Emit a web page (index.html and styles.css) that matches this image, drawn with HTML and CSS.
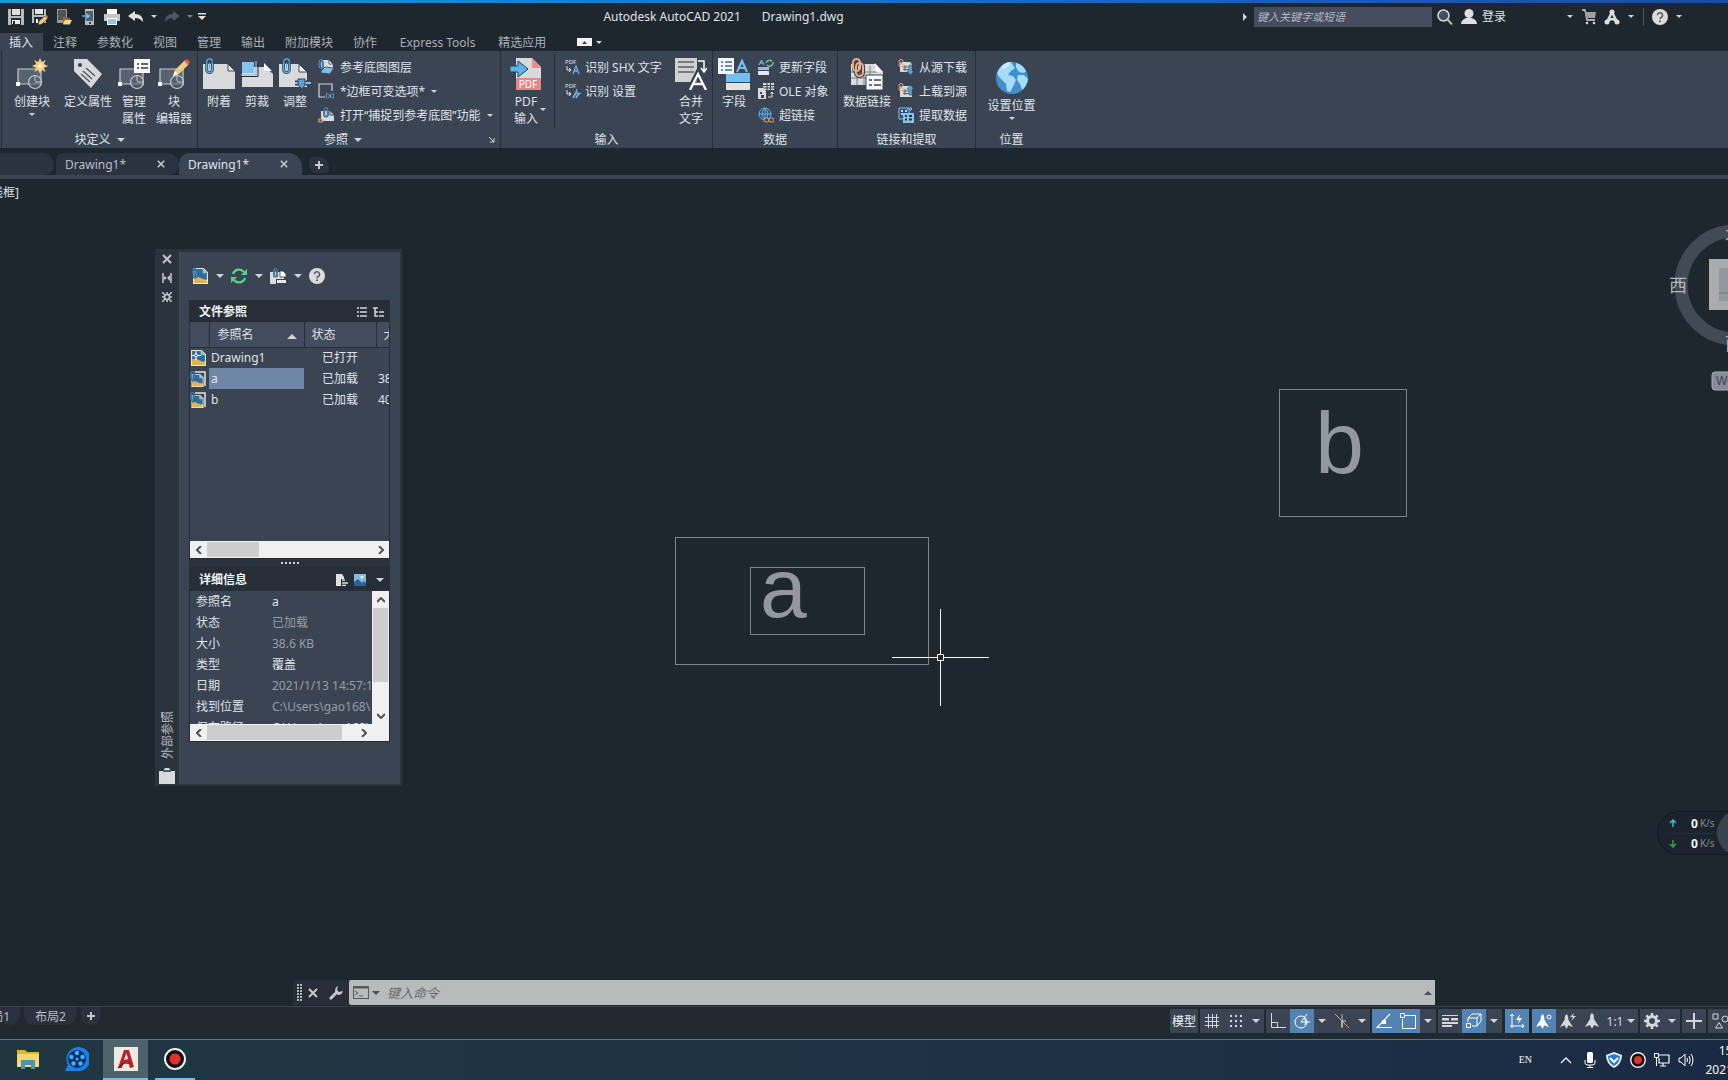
FILE: index.html
```html
<!DOCTYPE html>
<html lang="zh-CN">
<head>
<meta charset="utf-8">
<title>Autodesk AutoCAD 2021 - Drawing1.dwg</title>
<link rel="stylesheet" href="styles.css">
</head>
<body>
<svg class="defs" aria-hidden="true">
  <symbol id="clip" viewBox="0 0 9 18"><path d="M7.500 4v8.500a3 3 0 0 1-6 0V4a2.500 2.500 0 0 1 5 0" fill="none" stroke="#1d4468" stroke-width="3"/><path d="M7.500 4.500v8a3 3 0 0 1-6 0V4a3 3 0 0 1 6 0M4.500 5v7" fill="none" stroke="#6cb2e2" stroke-width="1.300"/></symbol>
  <symbol id="block" viewBox="0 0 32 32"><path d="M2 11h23v15H2z" fill="#596270" stroke="#c9cbce" stroke-width="1.200"/><path d="M0 24h4v4H0z" fill="#fff"/><circle cx="19" cy="24" r="6.500" fill="#596270" fill-opacity=".6" stroke="#c9cbce" stroke-width="1.200"/><path d="M19 23v-6M19 24h6" stroke="#c9cbce"/></symbol>
  <symbol id="sheet" viewBox="0 0 32 32"><path d="M0 6h25l7 7v18H0z" fill="#d9dadb"/><path d="M25 6v7h7z" fill="#fff" stroke="#39424f"/></symbol>
  <symbol id="xref" viewBox="1 1 14 15"><path d="M1 1h10l4 4v11H1z" fill="#efe9c9"/><path d="M2 2h8l4 4v6H2z" fill="#2c6c9f"/><path d="M2 10l3-1 9 4v2H2z" fill="#e4b44b"/><path d="M10 1v5h5z" fill="#8fc0e0"/></symbol>
  <symbol id="help" viewBox="0 0 16 16"><circle cx="8" cy="8" r="8" fill="#dcdcdc"/><path d="M5.500 6.300a2.500 2.500 0 1 1 3.600 2.200q-1.100.6-1.100 1.800" fill="none" stroke="#555d66" stroke-width="1.500"/><circle cx="8" cy="12.300" r="1" fill="#555d66"/></symbol>
  <symbol id="cross" viewBox="0 0 10 10"><path d="M1 1l8 8M9 1l-8 8" stroke="#c4c8cc" stroke-width="2"/></symbol>
  <symbol id="ann" viewBox="0 0 16 16"><path d="M8 0q2 1 2 6l5 8-5-2-2 4-2-4-5 2 5-8q0-5 2-6z" fill="currentColor"/></symbol>
  <symbol id="rec" viewBox="0 0 22 22"><circle cx="11" cy="11" r="10" fill="#160d0e" stroke="#eceeee" stroke-width="2"/><circle cx="11" cy="11" r="5.500" fill="#e2302d"/></symbol>
</svg>

<div class="edge"></div>
<header class="titlebar">
  <div class="qat">
    <button aria-label="保存"><svg class="i16" viewBox="0 0 16 16"><path d="M0 0h16v16H0z" fill="#b9bdb9"/><path d="M3 0h10v7H3z" fill="#232b33"/><path d="M4 0h8v6H4z" fill="#dcdedc"/><path d="M3 9h10v7H3z" fill="#232b33"/><path d="M4 11h8v4H4z" fill="#e8eae8"/><path d="M5 12h2v3H5z" fill="#232b33"/></svg></button>
    <button aria-label="另存为"><svg class="i16" viewBox="0 0 16 16"><path d="M0 0h14v14H0z" fill="#b9bdb9"/><path d="M2 0h10v6H2z" fill="#232b33"/><path d="M3 0h8v5H3z" fill="#e4e6e4"/><path d="M2 8h10v6H2z" fill="#232b33"/><path d="M4 10h2v4H4z" fill="#f0f0f0"/><path d="M6 16l1-4 6-5 3 2-6 6z" fill="#f0cd7a" stroke="#3a3227" stroke-width=".6"/><path d="M13 7l2-1 1 2-1 1z" fill="#e2614f"/></svg></button>
    <button aria-label="打开"><svg class="i16" viewBox="0 0 16 16"><path d="M1 0h10v14H1z" fill="#9a9894"/><path d="M2 1h8v10H2z" fill="#55534f"/><path d="M7 8h3l1 1h3v7H7z" fill="#8c6f3e"/><path d="M9 11h7l-2 4H7z" fill="#f3d58c"/></svg></button>
    <button aria-label="保存到移动设备"><svg class="i16" viewBox="0 0 16 16"><path d="M5 0h9v16H5z" fill="#b8bcc0"/><path d="M6 2h7v10H6z" fill="#56606a"/><path d="M9 13h2v2H9z" fill="#39424f"/><path d="M2 6h4V3l5 4-5 4V8H2z" fill="#6fbdf0" stroke="#1f2f3c" stroke-width=".5"/></svg></button>
    <button aria-label="打印"><svg class="i16" viewBox="0 0 16 16"><path d="M3 0h10v5H3z" fill="#fff"/><path d="M0 5h16v7H0z" fill="#c6c8c9"/><path d="M3 9h10v7H3z" fill="#fff"/><path d="M4 10h8v5H4z" fill="#8dc8ee"/></svg></button>
    <button aria-label="放弃"><svg class="i16" viewBox="0 0 16 16"><path d="M0 7l7-5v3q8 0 8 8-3-4-8-4v3z" fill="#dde0e2"/></svg></button>
    <button class="narrow" aria-label="放弃列表"><i class="caret"></i></button>
    <button aria-label="重做"><svg class="i16" viewBox="0 0 16 16"><path d="M16 7L9 2v3q-8 0-8 8 3-4 8-4v3z" fill="#4f5964"/></svg></button>
    <button class="narrow" aria-label="重做列表"><i class="caret dim"></i></button>
    <button class="narrow" aria-label="自定义快速访问工具栏"><svg width="8" height="8" viewBox="0 0 8 8"><path d="M0 0h8v1.500H0zM0 3h8L4 7z" fill="#dde0e2"/></svg></button>
  </div>
  <h1 class="title"><span>Autodesk AutoCAD 2021</span><span>Drawing1.dwg</span></h1>
  <div class="infocenter">
    <i class="caret-right"></i>
    <input class="search" type="search" placeholder="键入关键字或短语" aria-label="搜索">
    <button aria-label="搜索"><svg class="i16" viewBox="0 0 16 16"><circle cx="6.500" cy="6.500" r="5.500" fill="#454e5a" stroke="#d5d8da" stroke-width="1.500"/><path d="M10.500 10.500l4.500 5" stroke="#c9b593" stroke-width="2"/></svg></button>
    <button class="login"><svg class="i16" viewBox="0 0 16 16"><circle cx="8" cy="4.500" r="4.500" fill="#dcdedf"/><path d="M0 15q0-4 5-6h6q5 2 5 6z" fill="#dcdedf"/></svg>登录</button>
    <button class="narrow" aria-label="登录选项"><i class="caret"></i></button>
    <button aria-label="应用商店"><svg class="i16" viewBox="0 0 16 16"><path d="M1 1h3l2 10h8" fill="none" stroke="#d4d6d8" stroke-width="1.300"/><path d="M4 3h11l-1 6H5z" fill="#9a9fa4"/><circle cx="6" cy="14" r="1.300" fill="#d4d6d8"/><circle cx="13" cy="14" r="1.300" fill="#d4d6d8"/></svg></button>
    <button aria-label="保持连接"><svg class="i16" viewBox="0 0 16 16"><path d="M8 3L3 13M8 3l5 10M4 12q4-4 8 0" fill="none" stroke="#dcdedf" stroke-width="2.500"/><circle cx="8" cy="3" r="2.500" fill="#dcdedf"/><circle cx="3" cy="13" r="2.500" fill="#dcdedf"/><circle cx="13" cy="13" r="2.500" fill="#dcdedf"/></svg></button>
    <button class="narrow" aria-label="连接选项"><i class="caret"></i></button>
    <i class="sep"></i>
    <button aria-label="帮助"><svg class="i16"><use href="#help"/></svg></button>
    <button class="narrow" aria-label="帮助选项"><i class="caret"></i></button>
  </div>
</header>

<nav class="ribbon-tabs">
  <button class="on">插入</button><button>注释</button><button>参数化</button><button>视图</button><button>管理</button><button>输出</button><button>附加模块</button><button>协作</button><button class="express">Express Tools</button><button>精选应用</button>
  <button class="minimize" aria-label="最小化功能区"><svg width="15" height="8" viewBox="0 0 15 8"><path d="M0 0h15v8H0z" fill="#f2f2f2"/><path d="M5 6l2.500-3L10 6z" fill="#39424f"/></svg><i class="caret"></i></button>
</nav>

<section class="ribbon">
  <section class="panel p-block">
    <div class="tools">
      <button class="big w52"><svg class="i32" viewBox="0 0 32 32"><use href="#block"/><path d="M24 0l1.800 4 4-2-2 4 4.200 2-4.200 2 2 4-4-2L24 16l-1.800-4-4 2 2-4L16 8l4.200-2-2-4 4 2z" fill="#f6cf7c"/><path d="M24 4l1 3 3 1-3 1-1 3-1-3-3-1 3-1z" fill="#fff2c8"/></svg><span>创建块</span><i class="caret"></i></button>
      <button class="big w52"><svg class="i32" viewBox="0 0 32 32"><path d="M2 1h13l15 15-11 14L2 13z" fill="#d9d9d9"/><circle cx="8" cy="7" r="2" fill="#39424f"/><path d="M14 10l9 8M11 13l9 8M9 16l9 8" stroke="#4a525d" stroke-width="1.200"/></svg><span>定义属性</span></button>
      <button class="big w32"><svg class="i32" viewBox="0 0 32 32"><use href="#block"/><path d="M16 1h16v14H16z" fill="#fbfbfb"/><path d="M19 6h2M23 6h7M19 10h2M23 10h7" stroke="#333c48" stroke-width="1.500"/></svg><span>管理<br>属性</span></button>
      <button class="big w40"><svg class="i32" viewBox="0 0 32 32"><use href="#block"/><path d="M15 18l2-6L27 2l4 4-10 10z" fill="#f2cb7e"/><path d="M15 18l2-5 3 3z" fill="#fff"/><path d="M26 3l3-2 3 3-2 3z" fill="#e0604f"/></svg><span>块<br>编辑器</span></button>
    </div>
    <h2>块定义<i class="caret wide"></i></h2>
  </section>

  <section class="panel p-ref">
    <div class="tools">
      <button class="big w32"><svg class="i32" viewBox="0 0 32 32"><use href="#sheet"/><use href="#clip" x="2" y="0" width="9" height="17"/></svg><span>附着</span></button>
      <button class="big w32"><svg class="i32" viewBox="0 0 32 32"><path d="M1 9h23l8 7v13H1z" fill="#d9dadb"/><path d="M23 5l8 8h-8z" fill="#fff"/><path d="M1 4h12v11H1z" fill="#84c3f0"/><path d="M0 17h15V3" fill="none" stroke="#84c3f0" stroke-width="1.200"/><path d="M0 18.500h17V3" fill="none" stroke="#27313c"/></svg><span>剪裁</span></button>
      <button class="big w32"><svg class="i32" viewBox="0 0 32 32"><path d="M0 6h20l8 8v15H0z" fill="#d9dadb"/><path d="M20 6v8h8z" fill="#fff" stroke="#39424f"/><path d="M16 25h16" stroke="#39424f" stroke-width="5"/><path d="M16 25h16" stroke="#84c3f0" stroke-width="2"/><path d="M19 21h7v6l-3 4-4-4z" fill="#5d9fd2" stroke="#39424f"/><use href="#clip" x="3" y="0" width="9" height="17"/></svg><span>调整</span></button>
      <div class="stack">
        <button><svg class="i16" viewBox="0 0 16 16"><path d="M3 1h8l4 4v5H3z" fill="#d9dadb"/><path d="M11 1v4h4z" fill="#fff" stroke="#39424f" stroke-width=".8"/><path d="M3 12l4-4 9 1-4 6-9-1z" fill="#7dbbe8" stroke="#39424f" stroke-width=".8"/><use href="#clip" x="0" y="0" width="6" height="11"/></svg>参考底图图层</button>
        <button><svg class="i16" viewBox="0 0 16 16"><path d="M7 14H1V1h13v7" fill="none" stroke="#d5d7d9" stroke-width="1.200"/><path d="M9 10q-2 3 0 5.500M15 10q2 3 0 5.500M10.500 11l3 4M13.500 11l-3 4" fill="none" stroke="#6cb2e2"/></svg>*边框可变选项*<i class="caret"></i></button>
        <button><svg class="i16" viewBox="0 0 16 16"><path d="M3 4h9l4 4v6H3z" fill="#d9dadb"/><path d="M12 3v5h4" fill="none" stroke="#39424f"/><path d="M1 12h3v3H1z" fill="#39424f" stroke="#e5a07b" stroke-width="1.200"/><use href="#clip" x="5" y="0" width="6" height="11"/></svg>打开“捕捉到参考底图”功能<i class="caret"></i></button>
      </div>
    </div>
    <h2>参照<i class="caret wide"></i></h2>
    <button class="launcher" aria-label="外部参照"><svg width="6" height="6" viewBox="0 0 6 6"><path d="M0 0l5 5M5 1v4H1" fill="none" stroke="#d5d7d9"/></svg></button>
  </section>

  <section class="panel p-import">
    <div class="tools">
      <button class="big w40 pdf"><svg class="i32" viewBox="0 0 32 32"><path d="M6 0h16l9 9v13H6z" fill="#d9d9d9"/><path d="M22 0v10h9z" fill="#f08a8a"/><path d="M6 20h25v12H6z" fill="#ec8585"/><text x="18" y="30" class="pdf-text">PDF</text><path d="M0 8h8V3l10 8-10 8v-5H0z" fill="#5cb4ea" stroke="#24425a"/></svg><span>PDF<br>输入</span><i class="caret"></i></button>
      <i class="rule"></i>
      <div class="stack">
        <button><svg class="i16" viewBox="0 0 16 16"><text x="0" y="5" class="tiny">PDF</text><path d="M2 7v4h4M4 9l2 2-2 2" fill="none" stroke="#e6e8ea"/><path d="M8 15l3-8 3 8M9 12h4" fill="none" stroke="#6cb2e2" stroke-width="1.300"/></svg>识别 SHX 文字</button>
        <button><svg class="i16" viewBox="0 0 16 16"><text x="0" y="5" class="tiny">PDF</text><path d="M2 7v4h4M4 9l2 2-2 2" fill="none" stroke="#e6e8ea"/><path d="M8 15l4-7M11 15l3-5" fill="none" stroke="#6cb2e2" stroke-width="1.800"/><path d="M12 6l-1 3 2 2 3-1" fill="none" stroke="#6cb2e2" stroke-width="1.200"/></svg>识别 设置</button>
      </div>
      <button class="big w40"><svg class="i32" viewBox="0 0 32 32"><path d="M0 0h22v24H0z" fill="#d0d1d2"/><path d="M3 4h16M3 9h16M3 14h16" stroke="#5a5f66" stroke-width="1.500"/><path d="M23 3h6v11M26 10l3 4 3-4" fill="none" stroke="#fff" stroke-width="1.500"/><path d="M14 32l8-16 8 16M17 26h10" fill="none" stroke="#39424f" stroke-width="5"/><path d="M15 32l8-16 8 16M18 26h10" fill="none" stroke="#fff" stroke-width="2.300"/></svg><span>合并<br>文字</span></button>
    </div>
    <h2>输入</h2>
  </section>

  <section class="panel p-data">
    <div class="tools">
      <button class="big w32"><svg class="i32" viewBox="0 0 32 32"><path d="M8 15h24v9H8z" fill="#74bdf0"/><path d="M8 25h24v7H8z" fill="#e1e2e3"/><path d="M0 0h16v16H0z" fill="#f4f8fb"/><path d="M3 4h2M7 4h7M3 8h2M7 8h7M3 12h2M7 12h7" stroke="#2e6fa3" stroke-width="1.600"/><path d="M19 14l5-11 5 11M21 10h6" fill="none" stroke="#74bdf0" stroke-width="2.200"/></svg><span>字段</span></button>
      <div class="stack">
        <button><svg class="i16" viewBox="0 0 16 16"><path d="M1 6l2.500-5L6 6M2 4h3" fill="none" stroke="#84c3f0"/><path d="M8 4a3.500 3.500 0 0 1 6-1.500M15 3a3.500 3.500 0 0 1-6 3" fill="none" stroke="#68c78c" stroke-width="1.500"/><path d="M0 8h11v3H0z" fill="#84c3f0"/><path d="M0 12h11v4H0z" fill="#e6e7e8"/></svg>更新字段</button>
        <button><svg class="i16" viewBox="0 0 16 16"><path d="M5 0h11v7H5z" fill="#d9dadb"/><path d="M5 2.500h11M5 5h11M9 0v7M12.500 0v7" stroke="#39424f"/><path d="M0 5h5l3 3v8H0z" fill="#d9dadb"/><path d="M2 9h2v2H2zM3 12h3v3H3z" fill="#39424f"/><path d="M10 14h4V9M12.500 11L14 9l1.500 2" fill="none" stroke="#d9dadb"/></svg>OLE 对象</button>
        <button><svg class="i16" viewBox="0 0 16 16"><circle cx="7" cy="7" r="6" fill="#274f76" stroke="#6cb2e2"/><path d="M1 7h12M7 1v12M7 1q-6 6 0 12M7 1q6 6 0 12" fill="none" stroke="#6cb2e2"/><rect x="6" y="11" width="5" height="4" rx="2" fill="#39424f" stroke="#e7a470"/><rect x="11" y="11" width="5" height="4" rx="2" fill="#39424f" stroke="#e7a470"/></svg>超链接</button>
      </div>
    </div>
    <h2>数据</h2>
  </section>

  <section class="panel p-link">
    <div class="tools">
      <button class="big w52"><svg class="i32" viewBox="0 0 32 32"><path d="M0 6h24l8 8v13H0z" fill="#d9dadb"/><path d="M24 5v9h8z" fill="#fff"/><path d="M0 14h26M0 20h20M6 8v19M13 8v19M19 8v10" stroke="#7b828a"/><rect x="3" y="1" width="7" height="13" rx="3.500" fill="none" stroke="#39424f" stroke-width="4"/><rect x="5" y="5" width="7" height="13" rx="3.500" fill="none" stroke="#39424f" stroke-width="4"/><rect x="2" y="1" width="7" height="12" rx="3.500" fill="none" stroke="#e9ae84" stroke-width="2"/><rect x="5" y="5" width="7" height="13" rx="3.500" fill="none" stroke="#e9ae84" stroke-width="2"/><path d="M15 17h17v15H15z" fill="#fff" stroke="#39424f"/><path d="M18 22h3M23 22h7M18 27h3M23 27h7" stroke="#39424f" stroke-width="1.500"/></svg><span>数据链接</span></button>
      <div class="stack">
        <button><svg class="i16" viewBox="0 0 16 16"><path d="M4 3h8l2 2v8H2V6z" fill="#d9dadb"/><path d="M5 8h6M5 10.500h6M7 6v6" stroke="#59616b"/><circle cx="3" cy="2.500" r="2" fill="none" stroke="#e9ae84"/><circle cx="3" cy="6" r="2" fill="none" stroke="#e9ae84"/><path d="M11 6h3v6h2l-3.500 4L9 12h2z" fill="#5cabe6" stroke="#39424f" stroke-width=".6"/></svg>从源下载</button>
        <button><svg class="i16" viewBox="0 0 16 16"><path d="M4 3h8l2 2v9H2V6z" fill="#d9dadb"/><path d="M5 8h6M5 10.500h6M7 6v6" stroke="#59616b"/><circle cx="3" cy="2.500" r="2" fill="none" stroke="#e9ae84"/><circle cx="3" cy="6" r="2" fill="none" stroke="#e9ae84"/><path d="M11 12V6H9l3.500-4L16 6h-2v6z" fill="#5cabe6" stroke="#39424f" stroke-width=".6"/></svg>上载到源</button>
        <button><svg class="i16" viewBox="0 0 16 16"><path d="M1 1h10v11H1z" fill="#274f76" stroke="#84c3f0"/><path d="M3 4h2M7 4h2M3 7h2" stroke="#fff" stroke-width="1.500"/><path d="M5 6h11v10H5z" fill="#84c3f0"/><path d="M7 9h2M11 9h3M7 12.500h2M11 12.500h3" stroke="#243240" stroke-width="2"/><path d="M9 2h5M12 0l2 2-2 2" fill="none" stroke="#84c3f0"/></svg>提取数据</button>
      </div>
    </div>
    <h2>链接和提取</h2>
  </section>

  <section class="panel p-loc">
    <div class="tools">
      <button class="big w52"><svg class="i32" viewBox="0 0 32 32"><circle cx="16" cy="16" r="16" fill="#3f8fcb"/><path d="M1 11Q4 3 12 0l4 2 3 4-4 3-3 4 5 1 3 4-2 5-4 7-3-1-1-7-4-4-3-3zM20 1q8 2 10 9l-4 1-4-2-2-4zM22 13l6 0 4 4q-1 7-6 11l-2-6-3-4z" fill="#a6dcfa"/><path d="M5 5q5-5 11-5l-3 4-5 3z" fill="#c9ecfd"/></svg><span>设置位置</span><i class="caret"></i></button>
    </div>
    <h2>位置</h2>
  </section>
</section>

<nav class="doc-tabs">
  <div class="doc blank"></div>
  <div class="doc"><button>Drawing1*</button><button aria-label="关闭"><svg width="8" height="8"><use href="#cross"/></svg></button></div>
  <div class="doc on"><button>Drawing1*</button><button aria-label="关闭"><svg width="8" height="8"><use href="#cross"/></svg></button></div>
  <button class="add" aria-label="新图形"><svg width="8" height="8" viewBox="0 0 8 8"><path d="M4 0v8M0 4h8" stroke="#c4c8cc" stroke-width="2"/></svg></button>
</nav>

<main class="canvas">
  <span class="vp-label">线框]</span>

  <svg class="model">
    <g fill="none" stroke="#7d858b">
      <rect x="675.500" y="358.500" width="253" height="127"/>
      <rect x="750.500" y="388.500" width="114" height="67"/>
      <rect x="1279.500" y="210.500" width="127" height="127"/>
    </g>
    <text x="760" y="438" class="letter narrow-a">a</text>
    <text x="1315" y="294" class="letter">b</text>
    <path d="M892 478.500h46M944 478.500h45M940.500 430v46M940.500 482v45M937.500 475.500h6v6h-6z" fill="none" stroke="#f2f4f5"/>
  </svg>

  <svg class="viewcube" width="70" height="200" viewBox="0 0 70 200">
    <circle cx="77" cy="76" r="54" fill="none" stroke="#424b54" stroke-width="13"/>
    <path d="M51 50h19v51H51z" fill="#a9abad"/>
    <path d="M61 59h9v33h-9z" fill="#92989e"/>
    <path d="M61 84h9" stroke="#6f767c"/>
    <text x="11" y="83" class="compass">西</text>
    <text x="67" y="32" class="compass">北</text>
    <text x="67" y="141" class="compass">南</text>
    <rect x="54" y="163" width="40" height="18" rx="3" fill="#868c9b" stroke="#a5aab4"/>
    <text x="58" y="176" class="wcs">WCS</text>
  </svg>

  <aside class="palette">
    <div class="strip">
      <button aria-label="关闭"><svg width="10" height="10"><use href="#cross"/></svg></button>
      <button aria-label="自动隐藏"><svg width="10" height="10" viewBox="0 0 10 10"><path d="M1 0v10M9 0v10" stroke="#c4c8cc" stroke-width="1.500"/><path d="M2 3l3 2-3 2zM8 2v6L5 5z" fill="#c4c8cc"/></svg></button>
      <button aria-label="特性"><svg width="10" height="10" viewBox="0 0 10 10"><path d="M0 0l3 3M10 0L7 3M0 10l3-3M10 10L7 7M5 0v2M5 10V8M0 5h2M10 5H8" stroke="#c4c8cc" stroke-width="1.500"/><circle cx="5" cy="5" r="2.500" fill="none" stroke="#c4c8cc" stroke-width="1.500"/></svg></button>
      <span class="name">外部参照</span>
      <svg width="16" height="16" viewBox="0 0 16 16"><path d="M0 3h4l2-3h4l2 3h4v13H0z" fill="#d8dad9"/><path d="M4 3h8" stroke="#2b333d" stroke-width="1.500"/></svg>
    </div>
    <div class="body">
      <div class="bar">
        <button aria-label="附着"><svg class="i16" viewBox="0 0 16 16"><use href="#xref" x="1" y="0" width="15" height="16"/><use href="#clip" x="0" y="0" width="6" height="11"/></svg></button><button class="narrow" aria-label="附着选项"><i class="caret wide"></i></button>
        <button aria-label="刷新"><svg class="i16" viewBox="0 0 16 16"><path d="M2 6a6.300 6.300 0 0 1 11-2M14 10A6.300 6.300 0 0 1 3 12" fill="none" stroke="#5fcf8b" stroke-width="2.200"/><path d="M16 1v6h-6zM0 15V9h6z" fill="#5fcf8b"/></svg></button><button class="narrow" aria-label="刷新选项"><i class="caret wide"></i></button>
        <button aria-label="更改路径"><svg class="i16" viewBox="0 0 16 16"><path d="M0 4h10l4 4v8H0z" fill="#d9dadb"/><path d="M10 3h3l3 3v3h-6z" fill="#fff" stroke="#39424f" stroke-width=".8"/><path d="M6 11h10v5H6z" fill="#39424f"/><path d="M7 12h9v3H7z" fill="#e8e8e8"/><use href="#clip" x="3" y="0" width="5" height="10"/></svg></button><button class="narrow" aria-label="路径选项"><i class="caret wide"></i></button>
        <button aria-label="帮助"><svg class="i16"><use href="#help"/></svg></button>
      </div>
      <div class="files">
        <h3>文件参照<span class="modes"><svg width="10" height="10" viewBox="0 0 10 10"><path d="M0 1h2M3 1h7M0 5h2M3 5h7M0 9h2M3 9h7" stroke="#d5d8da" stroke-width="1.500"/></svg><svg width="11" height="10" viewBox="0 0 11 10"><path d="M0 1h5M2 1v8h3M2 5h3M6 5h5M6 9h5" fill="none" stroke="#d5d8da" stroke-width="1.500"/></svg></span></h3>
        <div class="list">
          <table>
            <thead><tr><th class="c-icon"></th><th class="c-name">参照名<i class="caret-up"></i></th><th class="c-state">状态</th><th class="c-size">大小</th></tr></thead>
            <tbody>
              <tr><td><svg class="i16" viewBox="0 0 16 16"><use href="#xref" x="1" y="0" width="15" height="16"/><path d="M6 1v9M2 5.500h9" stroke="#fff"/><circle cx="6" cy="5.500" r="1.500" fill="#2c6c9f" stroke="#fff"/></svg></td><td>Drawing1</td><td class="state">已打开</td><td></td></tr>
              <tr class="sel"><td><svg class="i16" viewBox="0 0 16 16"><path d="M5 1h10v14" fill="none" stroke="#e6e6e6" stroke-width="1.500"/><use href="#xref" x="1" y="3" width="13" height="13"/><use href="#clip" x="0" y="0" width="5" height="10"/></svg></td><td>a</td><td class="state">已加载</td><td>38.6</td></tr>
              <tr><td><svg class="i16" viewBox="0 0 16 16"><path d="M5 1h10v14" fill="none" stroke="#e6e6e6" stroke-width="1.500"/><use href="#xref" x="1" y="3" width="13" height="13"/><use href="#clip" x="0" y="0" width="5" height="10"/></svg></td><td>b</td><td class="state">已加载</td><td>40.1</td></tr>
            </tbody>
          </table>
        </div>
        <div class="hscroll"><button aria-label="向左"><svg width="6" height="8" viewBox="0 0 6 8"><path d="M5 0L1 4l4 4" fill="none" stroke="#505050" stroke-width="2"/></svg></button><i class="thumb short"></i><button class="end" aria-label="向右"><svg width="6" height="8" viewBox="0 0 6 8"><path d="M1 0l4 4-4 4" fill="none" stroke="#505050" stroke-width="2"/></svg></button></div>
      </div>
      <div class="splitter"><i></i><i></i><i></i><i></i><i></i></div>
      <div class="details">
        <h3>详细信息<span class="modes"><svg width="12" height="12" viewBox="0 0 12 12"><path d="M0 0h6l2 3v2H5v7H0z" fill="#e0e1e2"/><path d="M6 6h3M6 9h6M6 11.500h4" stroke="#e0e1e2" stroke-width="1.500"/></svg><svg width="12" height="12" viewBox="0 0 12 12"><path d="M0 0h12v12H0z" fill="#7fbbe2"/><path d="M0 8l4-3 4 4 2-2 2 2v3H0z" fill="#2d648f"/><circle cx="8" cy="3" r="1.500" fill="#eaf5fb"/></svg><i class="caret wide"></i></span></h3>
        <div class="info">
          <dl>
            <dt>参照名</dt><dd class="edit">a</dd>
            <dt>状态</dt><dd>已加载</dd>
            <dt>大小</dt><dd>38.6 KB</dd>
            <dt>类型</dt><dd class="edit">覆盖</dd>
            <dt>日期</dt><dd>2021/1/13 14:57:11</dd>
            <dt>找到位置</dt><dd>C:\Users\gao168\</dd>
            <dt>保存路径</dt><dd class="edit">C:\Users\gao168\</dd>
          </dl>
          <div class="vscroll"><button aria-label="向上"><svg width="8" height="6" viewBox="0 0 8 6"><path d="M0 5l4-4 4 4" fill="none" stroke="#505050" stroke-width="2"/></svg></button><i class="thumb"></i><button class="end" aria-label="向下"><svg width="8" height="6" viewBox="0 0 8 6"><path d="M0 1l4 4 4-4" fill="none" stroke="#505050" stroke-width="2"/></svg></button></div>
        </div>
        <div class="hscroll inset"><button aria-label="向左"><svg width="6" height="8" viewBox="0 0 6 8"><path d="M5 0L1 4l4 4" fill="none" stroke="#505050" stroke-width="2"/></svg></button><i class="thumb long"></i><button class="end" aria-label="向右"><svg width="6" height="8" viewBox="0 0 6 8"><path d="M1 0l4 4-4 4" fill="none" stroke="#505050" stroke-width="2"/></svg></button></div>
      </div>
    </div>
  </aside>

  <div class="netmeter">
    <div><svg width="8" height="8" viewBox="0 0 8 8"><path d="M4 8V1M1 4l3-3 3 3" fill="none" stroke="#3fb6d8" stroke-width="1.500"/></svg><b>0</b><span>K/s</span></div>
    <div><svg width="8" height="8" viewBox="0 0 8 8"><path d="M4 0v7M1 4l3 3 3-3" fill="none" stroke="#2fa53c" stroke-width="1.500"/></svg><b>0</b><span>K/s</span></div>
    <i class="ball"></i>
  </div>

  <div class="command">
    <svg width="5" height="18" viewBox="0 0 5 18"><path d="M1 0v18M4 0v18" stroke="#b0b5ba" stroke-width="2" stroke-dasharray="2 1"/></svg>
    <button aria-label="关闭"><svg width="10" height="10"><use href="#cross"/></svg></button>
    <button aria-label="自定义"><svg width="14" height="14" viewBox="0 0 14 14"><path d="M1 13l7-7" stroke="#c4c8cc" stroke-width="3"/><path d="M9 0L8 4l2 2 4-1q-1 4-5 4L6 6q0-5 3-6z" fill="#c4c8cc"/></svg></button>
    <div class="entry">
      <svg width="16" height="13" viewBox="0 0 16 13"><rect x=".5" y=".5" width="15" height="12" fill="none" stroke="#555a5e"/><path d="M0 1.500h16" stroke="#555a5e" stroke-width="2"/><path d="M2 5l3 2-3 2M6 10h4" fill="none" stroke="#555a5e"/></svg>
      <i class="caret wide dark"></i>
      <input type="text" placeholder="键入命令" aria-label="命令">
      <i class="caret-up dark"></i>
    </div>
  </div>
</main>

<footer class="status">
  <div class="layouts"><button>局1</button><button>布局2</button><button class="add" aria-label="新建布局"><svg width="8" height="8" viewBox="0 0 8 8"><path d="M4 0v8M0 4h8" stroke="#c4c8cc" stroke-width="2"/></svg></button></div>
  <div class="toggles">
    <div class="grp"><button class="model-btn">模型</button></div>
    <div class="grp"><button aria-label="栅格"><svg class="i16" viewBox="0 0 16 16"><path d="M4.500 1v14M8.500 1v14M12.500 1v14M1 4.500h14M1 8.500h14M1 12.500h14" stroke="#d5d8da"/></svg></button><button aria-label="捕捉"><svg class="i16" viewBox="0 0 16 16"><path d="M2 3h14M2 8h14M2 13h14" stroke="#d5d8da" stroke-width="2" stroke-dasharray="2 3"/></svg></button><button class="arrow" aria-label="捕捉选项"><i class="caret wide"></i></button></div>
    <div class="grp"><button aria-label="正交"><svg class="i16" viewBox="0 0 16 16"><path d="M1.500 0v14.500H16M2 9.500h5.500V15" fill="none" stroke="#d5d8da"/></svg></button><button class="on" aria-label="极轴追踪"><svg class="i16" viewBox="0 0 16 16"><circle cx="7" cy="9" r="6" fill="none" stroke="#fff"/><path d="M7 9h9M7 9l6-8M10 5q3 3 1 7" fill="none" stroke="#fff"/></svg></button><button class="arrow" aria-label="极轴选项"><i class="caret wide"></i></button><button aria-label="等轴测"><svg class="i16" viewBox="0 0 16 16"><path d="M8 1v14" stroke="#93c98d"/><path d="M1 1l14 14" stroke="#d59b94"/><path d="M8 8h4M8 8v6" stroke="#d5d8da"/></svg></button><button class="arrow" aria-label="等轴测选项"><i class="caret wide"></i></button></div>
    <div class="grp"><button class="on" aria-label="对象捕捉追踪"><svg class="i16" viewBox="0 0 16 16"><path d="M14 1L1 14.500h15" fill="none" stroke="#fff" stroke-width="1.200"/><path d="M6 7h4v4H6z" fill="#fff"/></svg></button><button class="on" aria-label="对象捕捉"><svg class="i16" viewBox="0 0 16 16"><path d="M5 2.500h10.500v13h-13V6" fill="none" stroke="#fff"/><path d="M.500.500h4v4h-4z" fill="#5383b3" stroke="#fff"/></svg></button><button class="arrow" aria-label="对象捕捉选项"><i class="caret wide"></i></button></div>
    <div class="grp"><button aria-label="线宽"><svg class="i16" viewBox="0 0 16 16"><path d="M0 2.500h16M0 7h7M9 7h7" stroke="#d5d8da"/><path d="M0 6h7M9 6h7M0 10h16M0 13h10" stroke="#d5d8da" stroke-width="2"/></svg></button><button class="on" aria-label="三维对象捕捉"><svg class="i16" viewBox="0 0 16 16"><path d="M2 9V5l4-4h9v7l-4 5H6M2 5h9v8M11 5l4-4" fill="none" stroke="#fff"/><path d="M.500 10.500h4v4h-4z" fill="#5383b3" stroke="#fff"/></svg></button><button class="arrow" aria-label="三维捕捉选项"><i class="caret wide"></i></button></div>
    <div class="grp apart"><button class="on" aria-label="动态 UCS"><svg class="i16" viewBox="0 0 16 16"><path d="M3 1v12h12M1 3l2-2 2 2M13 11l2 2-2 2M1 13h2v2" fill="none" stroke="#fff"/><path d="M11 1L7 7h3l-1 4 4-6h-3z" fill="#fff"/></svg></button></div>
    <div class="grp apart"><button class="on" aria-label="注释可见性"><svg class="i16" viewBox="0 0 16 16"><use href="#ann" x="-1" y="1" width="15" height="15"/><circle cx="13" cy="4" r="2" fill="none" stroke="#fff"/></svg></button><button aria-label="自动缩放"><svg class="i16" viewBox="0 0 16 16"><use href="#ann" x="-1" y="1" width="15" height="15"/><path d="M14 0l-4 4h3l-2 4 5-5h-3z" fill="#d5d8da"/></svg></button><button aria-label="注释比例"><svg class="i16"><use href="#ann"/></svg></button><button class="scale">1:1<i class="caret wide"></i></button></div>
    <div class="grp"><button aria-label="切换工作空间"><svg class="i16" viewBox="0 0 16 16"><circle cx="8" cy="8" r="4.500" fill="none" stroke="#d5d8da" stroke-width="3"/><path d="M8 0v3M8 13v3M0 8h3M13 8h3M2.300 2.300l2 2M11.700 11.700l2 2M13.700 2.300l-2 2M4.300 11.700l-2 2" stroke="#d5d8da" stroke-width="2.500"/></svg></button><button class="arrow" aria-label="工作空间选项"><i class="caret wide"></i></button></div>
    <div class="grp"><button aria-label="注释监视器"><svg class="i16" viewBox="0 0 16 16"><path d="M8 0v16M0 8h16" stroke="#d5d8da" stroke-width="2"/></svg></button></div>
    <div class="grp last"><button aria-label="隔离对象"><svg class="i16" viewBox="0 0 16 16"><path d="M1 1h5v5H1zM7 15l-3.500 0L7 9.500l3.500 5.500z" fill="none" stroke="#d5d8da"/><circle cx="13" cy="6" r="3" fill="none" stroke="#d5d8da"/></svg></button></div>
  </div>
</footer>

<div class="taskbar">
  <div class="apps">
    <button aria-label="文件资源管理器"><svg width="22" height="20" viewBox="0 0 22 20"><path d="M0 1h8l2 2h12v15H0z" fill="#e0b13f"/><path d="M1 5h21v13H0V6z" fill="#f7d774"/><path d="M4 20v-9h14v9h-4v-4H8v4z" fill="#4f93ab"/></svg></button>
    <button aria-label="影音"><svg width="24" height="24" viewBox="0 0 24 24"><path d="M0 24l3-6A12 12 0 1 1 12 24z" fill="#1f7fe0"/><circle cx="12" cy="12" r="9" fill="#0b2f6e"/><g fill="#45b4f2"><circle cx="12" cy="12" r="1.500"/><circle cx="12" cy="6" r="2.200"/><circle cx="17.500" cy="10" r="2.200"/><circle cx="15.500" cy="16.500" r="2.200"/><circle cx="8.500" cy="16.500" r="2.200"/><circle cx="6.500" cy="10" r="2.200"/></g></svg></button>
    <button class="on" aria-label="AutoCAD"><svg width="24" height="24" viewBox="0 0 24 24"><path d="M0 0h24v24H0z" fill="#efe9e4"/><path d="M4 21L10 3h5l5 17-4 1-2-6-5 1-1 5z" fill="#b5242b"/><path d="M10 13l4-1-1.500-6z" fill="#efe9e4"/><path d="M4 21l6-5 6 0" stroke="#7d161b" fill="none" stroke-width="1.500"/></svg></button>
    <button class="open" aria-label="录屏"><svg width="22" height="22"><use href="#rec"/></svg></button>
  </div>
  <div class="tray">
    <span class="lang">EN</span>
    <svg width="16" height="8" viewBox="0 0 16 8"><path d="M3 7l5-5 5 5" fill="none" stroke="#f2f4f5" stroke-width="1.300"/></svg>
    <svg width="16" height="16" viewBox="-2 0 16 16"><rect x="3" y="0" width="6" height="11" rx="1.500" fill="#fff"/><path d="M1 8v3q0 2 3 2h4q3 0 3-2V8M6 13v3M3 15.500h6" fill="none" stroke="#fff"/></svg>
    <svg width="16" height="16" viewBox="0 0 16 16"><path d="M8 0l8 3q0 9-8 13Q0 12 0 3z" fill="#e8f2fb"/><path d="M8 2l6 2q0 7-6 10Q2 11 2 4z" fill="#2a79d8"/><path d="M4 6l4 4 4-4" fill="none" stroke="#fff" stroke-width="2"/></svg>
    <svg width="16" height="16"><use href="#rec"/></svg>
    <svg width="16" height="14" viewBox="0 0 16 14"><path d="M3 2h12v8H5V5M9 10v3M6 13h6" fill="none" stroke="#fff" stroke-width="1.200"/><path d="M.500.500h4v4h-4zM2.500 5v8" fill="#1b2b43" stroke="#fff"/></svg>
    <svg width="16" height="14" viewBox="0 0 16 14"><path d="M1 5h2l4-4v12L3 9H1z" fill="none" stroke="#fff"/><path d="M9 5q1 2 0 4M11 3q2.500 4 0 8M13 1q4 6 0 12" fill="none" stroke="#fff"/></svg>
    <div class="clock"><time>15:05<br>2021/1/13</time></div>
  </div>
</div>
</body>
</html>
```

FILE: styles.css
```css
* { box-sizing: border-box; }

:root {
  --bg: #1f272e;
  --panel: #3b4453;
  --tab: #2b3340;
  --text: #dfe3e8;
  --dim: #a9afb6;
  --line: #252d37;
}

body {
  margin: 0;
  height: 100vh;
  display: flex;
  flex-direction: column;
  overflow: hidden;
  background: var(--bg);
  color: var(--text);
  font: 12px/17px "Noto Sans", "Noto Sans CJK SC", sans-serif;
}

button {
  margin: 0;
  padding: 0;
  border: 0;
  background: none;
  color: inherit;
  font: inherit;
  white-space: nowrap;
  display: flex;
  align-items: center;
  justify-content: center;
  flex: none;
}

svg { display: block; flex: none; }
h1, h2, h3, dl, dd { margin: 0; font: inherit; }
.defs { position: absolute; width: 0; height: 0; }
.i16 { width: 16px; height: 16px; }
.i32 { width: 32px; height: 32px; }

.caret, .caret-up, .caret-right { flex: none; width: 0; height: 0; border: 3px solid transparent; }
.caret { border-top-color: #d0d4d8; border-bottom: 0; }
.caret.wide { border-width: 4px 4px 0; }
.caret.dim { border-top-color: #7b838b; }
.caret.dark { border-top-color: #4b4f53; }
.caret-up { border-width: 0 5px 5px; border-bottom-color: #d0d4d8; }
.caret-up.dark { border-width: 0 4px 4px; border-bottom-color: #4b4f53; }
.caret-right { border-width: 4px 0 4px 4px; border-left-color: #d0d4d8; }

/* title bar */
.edge { flex: none; height: 3px; background: linear-gradient(90deg, #1d97d8, #1668bd 65%, #1250a4); }
.titlebar { flex: none; height: 30px; display: flex; align-items: center; justify-content: space-between; padding: 0 45px 3px 8px; }
.qat { display: flex; gap: 8px; }
.qat .narrow { width: 10px; margin: 0 -3px; }
.title { display: flex; gap: 21px; }
.infocenter { display: flex; align-items: center; gap: 7px; }
.search { width: 178px; height: 20px; margin-right: -2px; padding: 0 3px; border: 0; background: #454d5f; color: var(--text); font: italic 11px/20px "Noto Sans", "Noto Sans CJK SC", sans-serif; }
.search::placeholder { color: #b4bac4; opacity: 1; }
.login { gap: 5px; margin: 0 53px 0 1px; }
.infocenter .narrow { width: 10px; margin: 0 -1px; }
.infocenter .sep { width: 1px; height: 18px; margin: 0 1px; background: #4b535c; }

/* ribbon tabs */
.ribbon-tabs { flex: none; height: 18px; display: flex; color: var(--dim); }
.ribbon-tabs button { padding: 0 10px; }
.ribbon-tabs .on { background: var(--panel); color: var(--text); padding-left: 9px; }
.ribbon-tabs .express { width: 101px; }
.ribbon-tabs .minimize { gap: 4px; padding-left: 21px; }

/* ribbon */
.ribbon { flex: none; display: flex; background: var(--panel); padding-left: 1px; }
.panel { position: relative; display: flex; flex-direction: column; border-left: 1px solid var(--line); }
.tools { height: 80px; display: flex; align-items: flex-start; }
.panel h2 { height: 17px; display: flex; align-items: center; justify-content: center; gap: 6px; }
.big { flex-direction: column; margin-top: 7px; text-align: center; }
.big svg { margin-bottom: 3px; }
.big .caret { margin-top: 3px; }
.w32 { width: 32px; }
.w40 { width: 40px; }
.w52 { width: 52px; }
.stack { display: flex; flex-direction: column; align-items: flex-start; padding-top: 4px; }
.stack button { height: 24px; gap: 6px; }

.p-block { width: 196px; }
.p-block .tools { gap: 4px; padding-left: 4px; }
.p-ref { width: 303px; }
.p-ref .tools { gap: 6px; padding-left: 5px; }
.p-ref .stack { margin-left: 1px; }
.p-ref h2 { padding-right: 12px; }
.p-import { width: 212px; }
.p-import .tools { padding-left: 5px; }
.p-import .stack { width: 102px; margin: 0 4px 0 10px; }
.p-import .stack button { gap: 4px; }
.p-data { width: 125px; }
.p-data .tools { gap: 8px; padding-left: 5px; }
.p-data .stack button { gap: 5px; }
.p-link { width: 138px; }
.p-link .tools { gap: 5px; padding-left: 3px; }
.p-link .stack button { gap: 5px; }
.p-loc { width: 72px; }
.p-loc .tools { justify-content: center; padding-top: 4px; }

.pdf { position: relative; }
.pdf .caret { position: absolute; right: 0; top: 47px; }
.pdf-text { font: 10px "Noto Sans", sans-serif; fill: #fff; text-anchor: middle; }
.tiny { font: 6px "Noto Sans", sans-serif; fill: #e6e8ea; }
.rule { align-self: stretch; width: 1px; margin: 3px 0 3px 8px; background: var(--line); }
.launcher { position: absolute; right: 5px; bottom: 5px; }

/* drawing tabs */
.doc-tabs { flex: none; height: 31px; display: flex; align-items: flex-end; border-bottom: 4px solid var(--panel); }
.doc { height: 22px; display: flex; align-items: center; justify-content: space-between; width: 123px; padding: 0 14px 0 9px; background: var(--tab); border-radius: 8px 14px 12px 0; color: #b9bec5; }
.doc.blank { width: 54px; margin-right: 2px; border-radius: 0 14px 12px 0; }
.doc.on { background: var(--panel); border-radius: 10px 14px 0 0; color: var(--text); }
.doc-tabs .add { width: 20px; height: 16px; margin: 0 0 2px 7px; background: var(--tab); border-radius: 4px 10px 4px 8px; }

/* model space */
.canvas { flex: 1; position: relative; min-height: 0; overflow: hidden; border-bottom: 1px solid #3b444c; }
.vp-label { position: absolute; left: -9px; top: 5px; }
.model { position: absolute; inset: 0; width: 100%; height: 100%; }
.letter { font: 88px "Liberation Sans", Arial, sans-serif; fill: #92989d; }
.letter.narrow-a { font-size: 84px; }
.viewcube { position: absolute; right: 0; top: 30px; }
.compass { font: 18px "Noto Sans CJK SC", sans-serif; fill: #b3b8b6; }
.wcs { font: 12px "Liberation Sans", Arial, sans-serif; fill: #3c424c; }

/* external references palette */
.palette { position: absolute; left: 155px; top: 70px; display: flex; width: 247px; height: 537px; padding: 0 2px 2px 0; background: #2b333d; }
.strip { width: 24px; display: flex; flex-direction: column; align-items: center; gap: 9px; padding-top: 5px; }
.strip .name { margin-top: auto; writing-mode: vertical-rl; text-orientation: sideways; transform: rotate(180deg); color: #b4b9bf; }
.body { flex: 1; min-width: 0; margin-top: 3px; padding: 16px 10px 0 9px; background: var(--panel); border-left: 1px solid #454e5c; }
.bar { display: flex; gap: 8px; padding: 0 3px; }
.bar .narrow { width: 9px; margin: 0 -1px; }
.files, .details { border: 1px solid var(--line); }
.files { margin-top: 16px; }
.files h3, .details h3 { display: flex; align-items: center; justify-content: space-between; height: 21px; padding: 0 5px 0 9px; background: #272e37; font-weight: 700; color: #f0f2f4; }
.modes { display: flex; align-items: center; gap: 6px; }
.list { height: 219px; overflow: hidden; }
table { width: 232px; table-layout: fixed; border-collapse: collapse; }
th { height: 25px; padding: 0 7px; border-right: 1px solid var(--line); border-bottom: 1px solid var(--line); background: #434b5e; font-weight: 400; text-align: left; white-space: nowrap; }
td { height: 21px; padding: 0 2px; }
td:first-child { padding: 0; }
.c-icon { width: 19px; }
.c-name { width: 95px; padding-left: 8px; }
.c-name .caret-up { float: right; margin-top: 8px; }
.c-state { width: 72px; }
.state { padding-left: 18px; }
.sel td:nth-child(2) { background: #7086a7; }
.hscroll { display: flex; height: 17px; background: #f0f0f0; padding: 1px 0; }
.hscroll button { width: 17px; }
.hscroll.inset { padding-right: 17px; }
.hscroll .end { margin-left: auto; }
.thumb { background: #cdcdcd; }
.thumb.short { width: 52px; }
.thumb.long { width: 135px; }
.splitter { height: 8px; display: flex; align-items: center; justify-content: center; gap: 2px; background: #2b323c; }
.splitter i { width: 2px; height: 2px; background: #d0d4d8; }
.info { display: flex; height: 133px; overflow: hidden; }
.info dl { flex: 1; min-width: 0; height: 154px; display: grid; grid-template-columns: 76px 1fr; grid-auto-rows: 21px; align-items: center; padding-left: 6px; overflow: hidden; white-space: nowrap; }
.info dd { color: #979da4; }
.info .edit { color: var(--text); }
.details h3 { height: 23px; }
.details .caret { margin-left: 4px; }
.vscroll { width: 17px; height: 133px; display: flex; flex-direction: column; background: #f0f0f0; padding: 0 1px; }
.vscroll button { height: 17px; }
.vscroll .thumb { height: 74px; }
.vscroll .end { margin-top: auto; }

/* network meter */
.netmeter { position: absolute; right: -24px; top: 632px; width: 95px; height: 44px; padding: 1px 0 1px 11px; border: 1px solid #12181f; border-radius: 22px; background: #1c232c; }
.netmeter div { display: flex; align-items: center; height: 20px; font-size: 10px; color: #868d95; }
.netmeter div + div { border-top: 1px solid #262e37; }
.netmeter b { margin: 0 2px 0 14px; font-size: 12px; color: #f2f4f5; }
.ball { position: absolute; right: -12px; top: -2px; width: 46px; height: 46px; border-radius: 50%; background: #39424f; }

/* command line */
.command { position: absolute; left: 293px; right: 293px; bottom: 1px; height: 25px; display: flex; align-items: center; gap: 6px; padding-left: 4px; background: #272e37; }
.command button { margin-right: 5px; }
.entry { flex: 1; align-self: stretch; display: flex; align-items: center; gap: 3px; margin-left: -5px; padding: 0 3px 0 4px; background: #b9bbbb; border-radius: 2px 0 0 2px; }
.entry input { flex: 1; padding: 0; margin-left: 4px; border: 0; background: none; color: #333; font: italic 13px/20px "Noto Sans", "Noto Sans CJK SC", sans-serif; }
.entry input::placeholder { color: #666a6d; opacity: 1; }

/* status bar */
.status { flex: none; height: 32px; display: flex; justify-content: space-between; background: #222830; }
.layouts { display: flex; height: 18px; color: #b9bec5; }
.layouts button { width: 53px; margin-right: 4px; background: #2a313c; border-radius: 0 0 12px 10px; }
.layouts button:first-child { width: 20px; padding-right: 10px; justify-content: flex-end; }
.layouts .add { width: 20px; }
.toggles { display: flex; gap: 2px; padding-top: 2px; }
.grp { display: flex; height: 24px; background: var(--panel); }
.grp button { width: 24px; height: 24px; color: #d5d8da; }
.grp .on { background: #5383b3; color: #fff; }
.grp .arrow { width: 16px; }
.grp .model-btn { width: 28px; color: #f0f2f4; }
.grp .scale { width: 34px; gap: 4px; }
.grp.apart { margin-left: 1px; }
.grp.last { width: 20px; overflow: hidden; }

/* taskbar */
.taskbar { flex: none; height: 41px; display: flex; justify-content: space-between; border-top: 1px solid #3d7ea8; background: linear-gradient(90deg, #1e3741, #1d3344 60%, #1a2a44); overflow: hidden; }
.apps { display: flex; padding-left: 4px; }
.apps button { width: 48px; border-bottom: 2px solid transparent; }
.apps button:nth-child(2) { margin: 0 2px 0 1px; }
.apps .on { width: 45px; background: #4d626a; border-color: #76b9ed; }
.apps .open { width: 40px; margin-left: 7px; border-color: #76b9ed; }
.tray { display: flex; align-items: center; gap: 8px; color: #f2f4f5; }
.tray .lang { margin-right: 18px; padding-bottom: 2px; font: 10px "Liberation Serif", serif; }
.clock { width: 24px; overflow: hidden; white-space: nowrap; margin-left: 2px; }
.clock time { display: block; width: 60px; text-align: center; line-height: 19px; }
```
